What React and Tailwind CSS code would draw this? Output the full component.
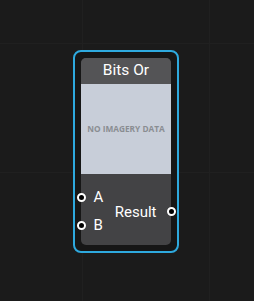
import React from 'react';

// Single node on a dark graph canvas
function Port() {
  return <span className="w-[9px] h-[9px] shrink-0 rounded-full border-2 border-white bg-black" />;
}

export default function App() {
  return (
    <div className="relative w-[254px] h-[301px] bg-[#1b1b1b] overflow-hidden font-['Roboto',sans-serif]">
      {/* faint canvas grid */}
      <div className="absolute left-[82px] top-0 h-full w-px bg-[#202020]" />
      <div className="absolute left-[209px] top-0 h-full w-px bg-[#202020]" />
      <div className="absolute top-[43px] left-0 w-full h-px bg-[#202020]" />
      <div className="absolute top-[172px] left-0 w-full h-px bg-[#202020]" />

      {/* node is placed on the free canvas */}
      <div className="absolute left-[73px] top-[50px] w-[106px] h-[203px] rounded-[8px] border-2 border-[#2ea9de] bg-[#161616] p-[6px]">
        <div className="flex flex-col h-full rounded-[5px] bg-[#434345]">
          <div className="h-[26px] flex items-center justify-center rounded-t-[5px] bg-[#545456] text-white text-[15.5px] leading-none">
            Bits Or
          </div>
          <div className="h-[90px] flex items-center justify-center bg-[#c8ced9]">
            <span className="text-[8.3px] font-bold text-[#8a8d92] font-['Open_Sans',sans-serif]">
              NO IMAGERY DATA
            </span>
          </div>
          <div className="flex-1 flex items-center justify-between pt-[4px] text-white text-[15px] leading-none">
            <div className="flex flex-col -ml-[4.5px]">
              <div className="h-[28px] flex items-center gap-[8px]">
                <Port />
                <span>A</span>
              </div>
              <div className="h-[28px] flex items-center gap-[8px]">
                <Port />
                <span>B</span>
              </div>
            </div>
            <div className="flex items-center gap-[10px] -mr-[4.5px]">
              <span className="pt-[2px]">Result</span>
              <Port />
            </div>
          </div>
        </div>
      </div>
    </div>
  );
}
